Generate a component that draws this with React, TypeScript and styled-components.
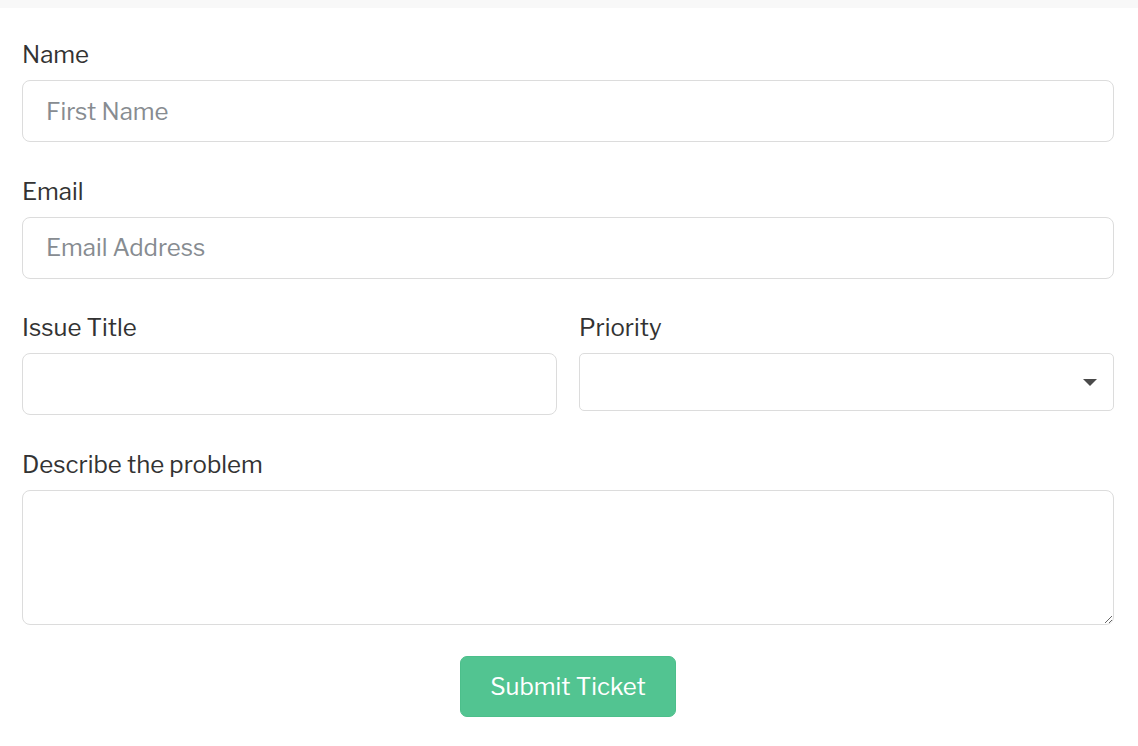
import React from "react";
import styled, { createGlobalStyle } from "styled-components";

const GlobalStyle = createGlobalStyle`
  html, body {
    margin: 0;
    padding: 0;
    background: #ffffff;
  }
  body {
    font-family: "Libre Franklin", "Inter", "Noto Sans", sans-serif;
    color: #333333;
  }
  * { box-sizing: border-box; }
`;

const TopBar = styled.div`
  height: 8px;
  background: #f8f8f8;
`;

const Form = styled.form`
  display: flex;
  flex-direction: column;
  padding: 29px 24px 30px 22px;
`;

const Row = styled.div`
  display: grid;
  grid-template-columns: 1fr 1fr;
  column-gap: 22px;
  align-items: start;
`;

const Field = styled.div`
  display: flex;
  flex-direction: column;
  margin-bottom: 31.7px;
`;

const Label = styled.label`
  font-size: 24px;
  line-height: 36px;
  color: #333333;
  margin-bottom: 7px;
`;

const Input = styled.input`
  height: 62px;
  width: 100%;
  border: 1px solid #dcdcdc;
  border-radius: 8px;
  padding: 0 23px;
  font-family: inherit;
  font-size: 24px;
  color: #333;
  background: #fff;
  outline: none;
  &::placeholder {
    color: #878c91;
  }
`;

const SelectWrap = styled.div`
  position: relative;
`;

const Select = styled.select`
  appearance: none;
  height: 58px;
  width: 100%;
  border: 1px solid #dcdcdc;
  border-radius: 5px;
  padding: 0 40px 0 18px;
  font-family: inherit;
  font-size: 24px;
  background: #fff;
  outline: none;
`;

const Caret = styled.span`
  position: absolute;
  right: 17px;
  top: 26px;
  width: 0;
  height: 0;
  border-left: 7px solid transparent;
  border-right: 7px solid transparent;
  border-top: 7px solid #4a4a4a;
  pointer-events: none;
`;

const TextArea = styled.textarea`
  height: 135px;
  width: 100%;
  border: 1px solid #dcdcdc;
  border-radius: 8px;
  padding: 12px 23px;
  font-family: inherit;
  font-size: 24px;
  background: #fff;
  outline: none;
  display: block;
`;

const Actions = styled.div`
  display: flex;
  justify-content: center;
  margin-top: -1px;
`;

const Button = styled.button`
  width: 216px;
  height: 61px;
  border: 1px solid #4cbf8b;
  border-radius: 7px;
  background: #52c491;
  color: #ffffff;
  font-family: inherit;
  font-size: 24px;
  cursor: pointer;
`;

export default function App() {
  return (
    <>
      <GlobalStyle />
      <TopBar />
      <Form onSubmit={(e) => e.preventDefault()}>
        <Field>
          <Label>Name</Label>
          <Input placeholder="First Name" />
        </Field>
        <Field>
          <Label>Email</Label>
          <Input placeholder="Email Address" />
        </Field>
        <Row>
          <Field>
            <Label>Issue Title</Label>
            <Input />
          </Field>
          <Field>
            <Label>Priority</Label>
            <SelectWrap>
              <Select defaultValue="">
                <option value=""></option>
                <option value="low">Low</option>
                <option value="medium">Medium</option>
                <option value="high">High</option>
              </Select>
              <Caret />
            </SelectWrap>
          </Field>
        </Row>
        <Field>
          <Label>Describe the problem</Label>
          <TextArea />
        </Field>
        <Actions>
          <Button type="submit">Submit Ticket</Button>
        </Actions>
      </Form>
    </>
  );
}
